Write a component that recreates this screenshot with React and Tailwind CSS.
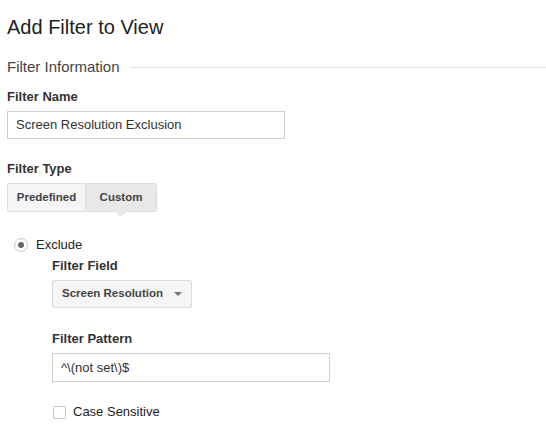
import React from 'react';

export default function App() {
  return (
    <div className="w-[546px] h-[437px] bg-white overflow-hidden px-[7px] pt-[14px] font-['Liberation_Sans',Arial,sans-serif] text-[#333]">
      <h1 className="text-[20px] leading-[26px] text-[#222]">Add Filter to View</h1>

      {/* Section heading */}
      <div className="flex items-center gap-[10px] mt-[17px]">
        <span className="text-[15px] leading-[20px] text-[#444] whitespace-nowrap">Filter Information</span>
        <div className="flex-1 h-px bg-[#e0e0e0] mr-[-7px]"></div>
      </div>

      <div className="mt-[12px] text-[13px] leading-[16px] font-bold">Filter Name</div>
      <div className="mt-[6px] w-[278px] h-[28px] border border-[#d0d0d0] flex items-center px-[8px] text-[13px] text-[#333]">
        Screen Resolution Exclusion
      </div>

      <div className="mt-[22px] text-[13px] leading-[16px] font-bold">Filter Type</div>
      <div className="mt-[6px] flex">
        <button className="h-[29px] w-[79px] border border-[#dcdcdc] rounded-l-[2px] bg-[#f5f5f5] text-[11.5px] font-bold text-[#444]">
          Predefined
        </button>
        <div className="relative">
          <button className="h-[29px] w-[71px] border border-l-0 border-[#dcdcdc] rounded-r-[2px] bg-[#e8e8e8] text-[11.5px] font-bold text-[#444]">
            Custom
          </button>
          <div className="absolute left-[28px] top-[28px] w-0 h-0 border-l-[7px] border-r-[7px] border-t-[6px] border-l-transparent border-r-transparent border-t-[#e8e8e8]"></div>
        </div>
      </div>

      <div className="mt-[25px] ml-[7px] flex items-center gap-[8px]">
        <div className="w-[14px] h-[14px] rounded-full border border-[#c8c8c8] flex items-center justify-center">
          <div className="w-[6px] h-[6px] rounded-full bg-[#666]"></div>
        </div>
        <span className="text-[13px] leading-[16px] text-[#222]">Exclude</span>
      </div>

      <div className="ml-[45px]">
        <div className="mt-[5px] text-[13px] leading-[16px] font-bold">Filter Field</div>
        <div className="mt-[6px] w-[140px] h-[28px] border border-[#dcdcdc] rounded-[2px] bg-[#f5f5f5] flex items-center justify-between pl-[9px] pr-[9px]">
          <span className="text-[11.5px] font-bold text-[#444]">Screen Resolution</span>
          <div className="w-0 h-0 border-l-[4px] border-r-[4px] border-t-[4px] border-l-transparent border-r-transparent border-t-[#777]"></div>
        </div>

        <div className="mt-[23px] text-[13px] leading-[16px] font-bold">Filter Pattern</div>
        <div className="mt-[6px] w-[278px] h-[29px] border border-[#d0d0d0] flex items-center px-[8px] text-[13px] text-[#333]">
          {'^\\(not set\\)$'}
        </div>

        <div className="mt-[22px] flex items-center gap-[7px]">
          <div className="w-[13px] h-[13px] border border-[#c8c8c8] rounded-[1px] ml-[1px]"></div>
          <span className="text-[13px] leading-[16px] text-[#222]">Case Sensitive</span>
        </div>
      </div>
    </div>
  );
}
